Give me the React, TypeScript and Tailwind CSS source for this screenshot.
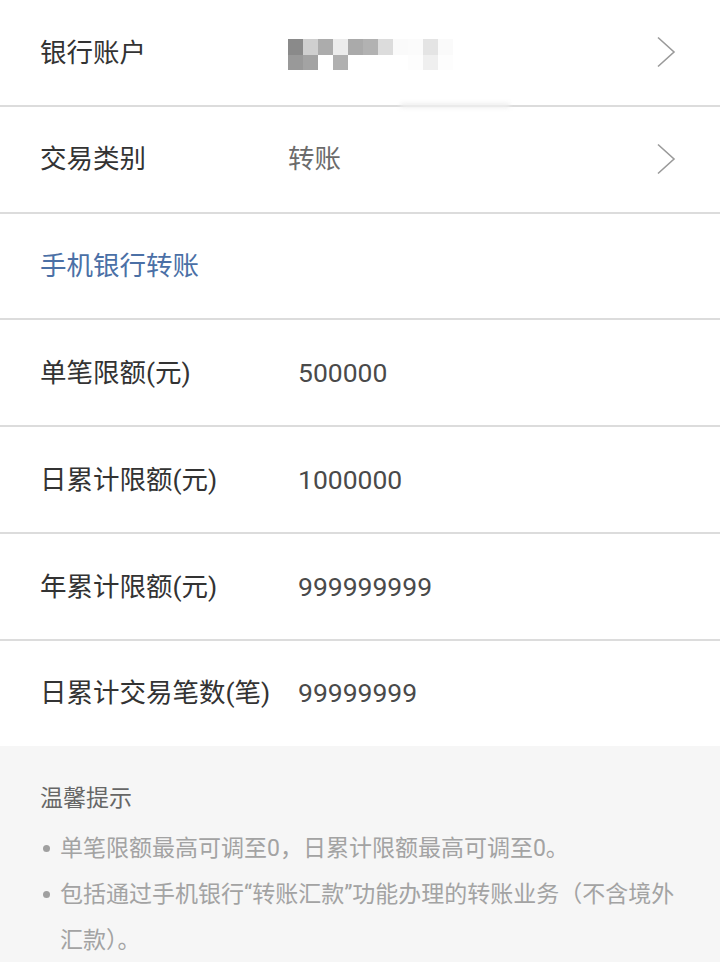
import React from "react";

const FONT = { fontFamily: "Roboto, 'Noto Sans CJK SC', sans-serif" };

function Chevron() {
  return (
    <svg width="20" height="32" viewBox="0 0 20 32" className="shrink-0">
      <polyline points="2,1.5 18,16 2,30.5" fill="none" stroke="#9a9a9a" strokeWidth="1.6" />
    </svg>
  );
}

function Blur() {
  const top = ["#8a8a8a", "#cfcfcf", "#acacac", "#ececec", "#aaaaaa", "#b2b2b2", "#dcdcdc", "#fafafa", "#fbfbfb", "#e4e4e4", "#fafafa"];
  const bottom = ["#999999", "#a3a3a3", "#ffffff", "#b0b0b0", "#ffffff", "#ffffff", "#ffffff", "#ffffff", "#fdfdfd", "#efefef", "#fdfdfd"];
  return (
    <div className="flex flex-col blur-[0.6px]">
      <div className="flex">
        {top.map((c, i) => (
          <div key={i} className="w-[15px] h-[16px]" style={{ backgroundColor: c }} />
        ))}
      </div>
      <div className="flex">
        {bottom.map((c, i) => (
          <div key={i} className="w-[15px] h-[15px]" style={{ backgroundColor: c }} />
        ))}
      </div>
    </div>
  );
}

export default function App() {
  const limits = [
    ["单笔限额(元)", "500000"],
    ["日累计限额(元)", "1000000"],
    ["年累计限额(元)", "999999999"],
    ["日累计交易笔数(笔)", "99999999"],
  ];
  return (
    <div className="w-[720px] h-[962px] bg-white overflow-hidden flex flex-col" style={FONT}>
      <div className="relative flex items-center h-[106.8px] shrink-0 border-b-2 border-[#dcdcdc] pl-10 pr-[44px]">
        <div className="w-[248px] text-[26.5px] text-[#333333]">银行账户</div>
        <div className="flex-1 pt-1">
          <Blur />
        </div>
        <Chevron />
        <div className="absolute left-[400px] bottom-[-3px] w-[110px] h-[5px] rounded-full bg-[#efefef] blur-[2px]" />
      </div>
      <div className="flex items-center h-[106.8px] shrink-0 border-b-2 border-[#dcdcdc] pl-10 pr-[44px]">
        <div className="w-[248px] text-[26.5px] text-[#333333]">交易类别</div>
        <div className="flex-1 text-[26.5px] text-[#6b6b6b]">转账</div>
        <Chevron />
      </div>
      <div className="flex items-center h-[106.8px] shrink-0 border-b-2 border-[#dcdcdc] pl-10">
        <div className="text-[26.5px] text-[#4b70a6]">手机银行转账</div>
      </div>
      {limits.map(([k, v], i) => (
        <div
          key={k}
          className={`flex items-center shrink-0 pl-10 ${i < limits.length - 1 ? "h-[106.8px] border-b-2 border-[#dcdcdc]" : "h-[104.8px]"}`}
        >
          <div className="w-[258px] text-[26.5px] text-[#333333] whitespace-nowrap">{k}</div>
          <div className="text-[26.5px] text-[#4a4a4a]">{v}</div>
        </div>
      ))}
      <div className="bg-[#f6f6f6] flex-1 pt-[30px] pl-10 pr-[30px]">
        <div className="text-[23px] leading-[46px] text-[#666666]">温馨提示</div>
        <div className="mt-1 text-[23px] leading-[46px] text-[#a3a3a3]">
          <div className="flex">
            <div className="w-5 shrink-0 flex items-center h-[46px]">
              <div className="ml-[3px] w-[7px] h-[7px] rounded-full bg-[#a0a0a0]" />
            </div>
            <div>单笔限额最高可调至0，日累计限额最高可调至0。</div>
          </div>
          <div className="flex">
            <div className="w-5 shrink-0 flex items-center h-[46px]">
              <div className="ml-[3px] w-[7px] h-[7px] rounded-full bg-[#a0a0a0]" />
            </div>
            <div>包括通过手机银行“转账汇款”功能办理的转账业务（不含境外汇款）。</div>
          </div>
        </div>
      </div>
    </div>
  );
}
